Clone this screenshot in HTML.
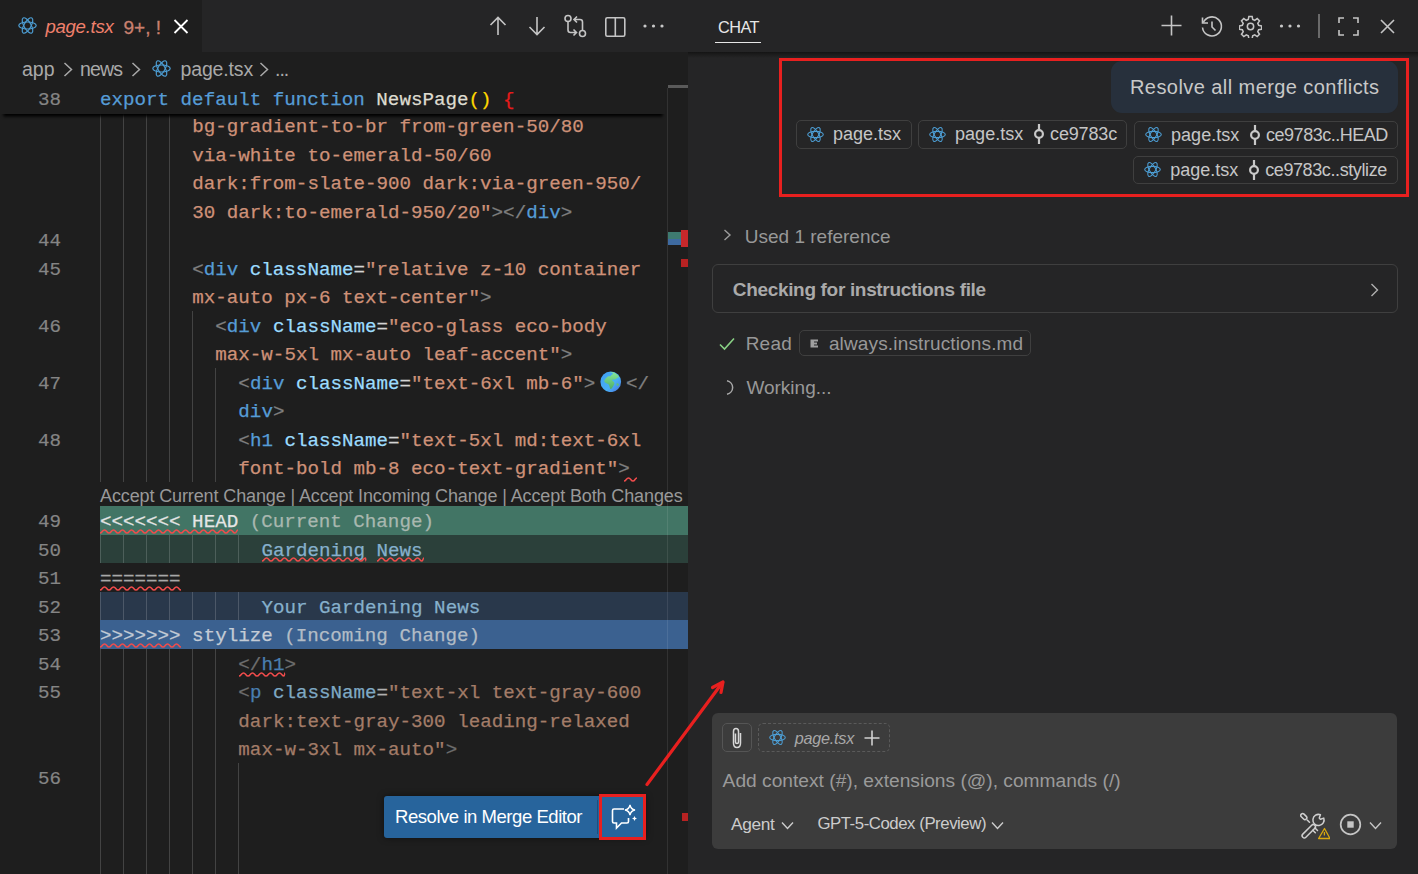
<!DOCTYPE html><html><head><meta charset="utf-8"><style>
*{box-sizing:border-box}
html,body{margin:0;padding:0}
body{width:1418px;height:874px;overflow:hidden;background:#1e1e1e;position:relative;font-family:"Liberation Sans",sans-serif}
.abs{position:absolute}
.row{position:absolute;left:0;width:668px;height:28.5px}
.code{position:absolute;left:100px;top:2.1px;-webkit-text-stroke:0.25px currentColor;height:28.5px;line-height:28.5px;white-space:pre;font-family:"Liberation Mono",monospace;font-size:19.2px;color:#d4d4d4}
.ln{position:absolute;left:0;width:61px;text-align:right;top:2px;-webkit-text-stroke:0.2px currentColor;line-height:28.5px;font-family:"Liberation Mono",monospace;font-size:19.2px;color:#858585}
.gd{position:absolute;top:0;width:1.6px;height:28.5px;background:rgba(255,255,255,0.165)}
.k{color:#569cd6}.f{color:#dcdcaa}.y{color:#ffd700}.rb{color:#f12b2b}.s{color:#ce9178}.p{color:#808080}.t{color:#569cd6}.a{color:#9cdcfe}.e{color:#d4d4d4}
.ds{color:#a37c68}.dp{color:#6e6e6e}.dt{color:#4a7eb0}.da{color:#7fa9c4}.de{color:#b0b0b0}
.w{color:#e6e6e6}.w2{color:#c4ccd6}.g3{color:#b2bcc6}.g{color:#a9b8b0}.g2{color:#a8a8a8}.lb{color:#86b0cc}
.sq{text-decoration:underline wavy #f14c4c;text-decoration-thickness:1.5px;text-underline-offset:4px}
</style></head><body>

<div class="abs" style="left:0;top:0;width:688px;height:52px;background:#252526"></div>
<div class="abs" style="left:0;top:0;width:202px;height:52px;background:#1e1e1e"></div>
<div class="row" style="top:111.30px">
<div class="gd" style="left:99.50px"></div>
<div class="gd" style="left:122.56px"></div>
<div class="gd" style="left:145.62px"></div>
<div class="gd" style="left:168.68px"></div>
<div class="code" style="left:192.24px"><span class="s">bg-gradient-to-br from-green-50/80</span></div>
</div>
<div class="row" style="top:139.80px">
<div class="gd" style="left:99.50px"></div>
<div class="gd" style="left:122.56px"></div>
<div class="gd" style="left:145.62px"></div>
<div class="gd" style="left:168.68px"></div>
<div class="code" style="left:192.24px"><span class="s">via-white to-emerald-50/60</span></div>
</div>
<div class="row" style="top:168.30px">
<div class="gd" style="left:99.50px"></div>
<div class="gd" style="left:122.56px"></div>
<div class="gd" style="left:145.62px"></div>
<div class="gd" style="left:168.68px"></div>
<div class="code" style="left:192.24px"><span class="s">dark:from-slate-900 dark:via-green-950/</span></div>
</div>
<div class="row" style="top:196.80px">
<div class="gd" style="left:99.50px"></div>
<div class="gd" style="left:122.56px"></div>
<div class="gd" style="left:145.62px"></div>
<div class="gd" style="left:168.68px"></div>
<div class="code" style="left:192.24px"><span class="s">30 dark:to-emerald-950/20"</span><span class="p">&gt;&lt;/</span><span class="t">div</span><span class="p">&gt;</span></div>
</div>
<div class="row" style="top:225.30px">
<div class="gd" style="left:99.50px"></div>
<div class="gd" style="left:122.56px"></div>
<div class="gd" style="left:145.62px"></div>
<div class="gd" style="left:168.68px"></div>
<div class="ln">44</div>
</div>
<div class="row" style="top:253.80px">
<div class="gd" style="left:99.50px"></div>
<div class="gd" style="left:122.56px"></div>
<div class="gd" style="left:145.62px"></div>
<div class="gd" style="left:168.68px"></div>
<div class="ln">45</div>
<div class="code" style="left:192.24px"><span class="p">&lt;</span><span class="t">div</span><span class="w"> </span><span class="a">className</span><span class="e">=</span><span class="s">"relative z-10 container</span></div>
</div>
<div class="row" style="top:282.30px">
<div class="gd" style="left:99.50px"></div>
<div class="gd" style="left:122.56px"></div>
<div class="gd" style="left:145.62px"></div>
<div class="gd" style="left:168.68px"></div>
<div class="code" style="left:192.24px"><span class="s">mx-auto px-6 text-center"</span><span class="p">&gt;</span></div>
</div>
<div class="row" style="top:310.80px">
<div class="gd" style="left:99.50px"></div>
<div class="gd" style="left:122.56px"></div>
<div class="gd" style="left:145.62px"></div>
<div class="gd" style="left:168.68px"></div>
<div class="gd" style="left:191.74px"></div>
<div class="ln">46</div>
<div class="code" style="left:215.30px"><span class="p">&lt;</span><span class="t">div</span><span class="w"> </span><span class="a">className</span><span class="e">=</span><span class="s">"eco-glass eco-body</span></div>
</div>
<div class="row" style="top:339.30px">
<div class="gd" style="left:99.50px"></div>
<div class="gd" style="left:122.56px"></div>
<div class="gd" style="left:145.62px"></div>
<div class="gd" style="left:168.68px"></div>
<div class="gd" style="left:191.74px"></div>
<div class="code" style="left:215.30px"><span class="s">max-w-5xl mx-auto leaf-accent"</span><span class="p">&gt;</span></div>
</div>
<div class="row" style="top:367.80px">
<div class="gd" style="left:99.50px"></div>
<div class="gd" style="left:122.56px"></div>
<div class="gd" style="left:145.62px"></div>
<div class="gd" style="left:168.68px"></div>
<div class="gd" style="left:191.74px"></div>
<div class="gd" style="left:214.80px"></div>
<div class="ln">47</div>
<div class="code" style="left:238.36px"><span class="p">&lt;</span><span class="t">div</span><span class="w"> </span><span class="a">className</span><span class="e">=</span><span class="s">"text-6xl mb-6"</span><span class="p">&gt;</span><span style="display:inline-block;width:30.6px"> </span><span class="p">&lt;/</span></div>
</div>
<div class="row" style="top:396.30px">
<div class="gd" style="left:99.50px"></div>
<div class="gd" style="left:122.56px"></div>
<div class="gd" style="left:145.62px"></div>
<div class="gd" style="left:168.68px"></div>
<div class="gd" style="left:191.74px"></div>
<div class="gd" style="left:214.80px"></div>
<div class="code" style="left:238.36px"><span class="t">div</span><span class="p">&gt;</span></div>
</div>
<div class="row" style="top:424.80px">
<div class="gd" style="left:99.50px"></div>
<div class="gd" style="left:122.56px"></div>
<div class="gd" style="left:145.62px"></div>
<div class="gd" style="left:168.68px"></div>
<div class="gd" style="left:191.74px"></div>
<div class="gd" style="left:214.80px"></div>
<div class="ln">48</div>
<div class="code" style="left:238.36px"><span class="p">&lt;</span><span class="t">h1</span><span class="w"> </span><span class="a">className</span><span class="e">=</span><span class="s">"text-5xl md:text-6xl</span></div>
</div>
<div class="row" style="top:453.30px">
<div class="gd" style="left:99.50px"></div>
<div class="gd" style="left:122.56px"></div>
<div class="gd" style="left:145.62px"></div>
<div class="gd" style="left:168.68px"></div>
<div class="gd" style="left:191.74px"></div>
<div class="gd" style="left:214.80px"></div>
<div class="code" style="left:238.36px"><span class="s">font-bold mb-8 eco-text-gradient"</span><span class="p">&gt;</span></div>
</div>
<div class="row" style="top:506.00px">
<div class="abs" style="left:100px;top:0;width:588px;height:28.5px;background:#427565;"></div>
<div class="ln">49</div>
<div class="code" style="left:100.00px"><span class="w">&lt;&lt;&lt;&lt;&lt;&lt;&lt; HEAD</span><span class="g"> (Current Change)</span></div>
</div>
<div class="row" style="top:534.50px">
<div class="abs" style="left:100px;top:0;width:588px;height:28.5px;background:#2b403a;"></div>
<div class="gd" style="left:99.50px"></div>
<div class="gd" style="left:122.56px"></div>
<div class="gd" style="left:145.62px"></div>
<div class="gd" style="left:168.68px"></div>
<div class="gd" style="left:191.74px"></div>
<div class="gd" style="left:214.80px"></div>
<div class="gd" style="left:237.86px"></div>
<div class="ln">50</div>
<div class="code" style="left:261.42px"><span class="lb">Gardening News</span></div>
</div>
<div class="row" style="top:563.00px">
<div class="ln">51</div>
<div class="code" style="left:100.00px"><span class="g2">=======</span></div>
</div>
<div class="row" style="top:591.50px">
<div class="abs" style="left:100px;top:0;width:588px;height:28.5px;background:#29384b;"></div>
<div class="gd" style="left:99.50px"></div>
<div class="gd" style="left:122.56px"></div>
<div class="gd" style="left:145.62px"></div>
<div class="gd" style="left:168.68px"></div>
<div class="gd" style="left:191.74px"></div>
<div class="gd" style="left:214.80px"></div>
<div class="gd" style="left:237.86px"></div>
<div class="ln">52</div>
<div class="code" style="left:261.42px"><span class="lb">Your Gardening News</span></div>
</div>
<div class="row" style="top:620.00px">
<div class="abs" style="left:100px;top:0;width:588px;height:28.5px;background:#3b6190;"></div>
<div class="ln">53</div>
<div class="code" style="left:100.00px"><span class="w2">&gt;&gt;&gt;&gt;&gt;&gt;&gt; stylize</span><span class="g3"> (Incoming Change)</span></div>
</div>
<div class="row" style="top:648.50px">
<div class="gd" style="left:99.50px"></div>
<div class="gd" style="left:122.56px"></div>
<div class="gd" style="left:145.62px"></div>
<div class="gd" style="left:168.68px"></div>
<div class="gd" style="left:191.74px"></div>
<div class="gd" style="left:214.80px"></div>
<div class="ln">54</div>
<div class="code" style="left:238.36px"><span class="dp">&lt;/</span><span class="dt">h1</span><span class="dp">&gt;</span></div>
</div>
<div class="row" style="top:677.00px">
<div class="gd" style="left:99.50px"></div>
<div class="gd" style="left:122.56px"></div>
<div class="gd" style="left:145.62px"></div>
<div class="gd" style="left:168.68px"></div>
<div class="gd" style="left:191.74px"></div>
<div class="gd" style="left:214.80px"></div>
<div class="ln">55</div>
<div class="code" style="left:238.36px"><span class="dp">&lt;</span><span class="dt">p</span><span class="w"> </span><span class="da">className</span><span class="de">=</span><span class="ds">"text-xl text-gray-600</span></div>
</div>
<div class="row" style="top:705.50px">
<div class="gd" style="left:99.50px"></div>
<div class="gd" style="left:122.56px"></div>
<div class="gd" style="left:145.62px"></div>
<div class="gd" style="left:168.68px"></div>
<div class="gd" style="left:191.74px"></div>
<div class="gd" style="left:214.80px"></div>
<div class="code" style="left:238.36px"><span class="ds">dark:text-gray-300 leading-relaxed</span></div>
</div>
<div class="row" style="top:734.00px">
<div class="gd" style="left:99.50px"></div>
<div class="gd" style="left:122.56px"></div>
<div class="gd" style="left:145.62px"></div>
<div class="gd" style="left:168.68px"></div>
<div class="gd" style="left:191.74px"></div>
<div class="gd" style="left:214.80px"></div>
<div class="code" style="left:238.36px"><span class="ds">max-w-3xl mx-auto"</span><span class="dp">&gt;</span></div>
</div>
<div class="row" style="top:762.50px">
<div class="gd" style="left:99.50px"></div>
<div class="gd" style="left:122.56px"></div>
<div class="gd" style="left:145.62px"></div>
<div class="gd" style="left:168.68px"></div>
<div class="gd" style="left:191.74px"></div>
<div class="gd" style="left:214.80px"></div>
<div class="gd" style="left:237.86px"></div>
<div class="ln">56</div>
</div>
<div class="row" style="top:791.00px">
<div class="gd" style="left:99.50px"></div>
<div class="gd" style="left:122.56px"></div>
<div class="gd" style="left:145.62px"></div>
<div class="gd" style="left:168.68px"></div>
<div class="gd" style="left:191.74px"></div>
<div class="gd" style="left:214.80px"></div>
<div class="gd" style="left:237.86px"></div>
</div>
<div class="row" style="top:819.50px">
<div class="gd" style="left:99.50px"></div>
<div class="gd" style="left:122.56px"></div>
<div class="gd" style="left:145.62px"></div>
<div class="gd" style="left:168.68px"></div>
<div class="gd" style="left:191.74px"></div>
<div class="gd" style="left:214.80px"></div>
<div class="gd" style="left:237.86px"></div>
</div>
<div class="row" style="top:848.00px">
<div class="gd" style="left:99.50px"></div>
<div class="gd" style="left:122.56px"></div>
<div class="gd" style="left:145.62px"></div>
<div class="gd" style="left:168.68px"></div>
<div class="gd" style="left:191.74px"></div>
<div class="gd" style="left:214.80px"></div>
<div class="gd" style="left:237.86px"></div>
</div>
<div class="row" style="top:876.50px">
<div class="gd" style="left:99.50px"></div>
<div class="gd" style="left:122.56px"></div>
<div class="gd" style="left:145.62px"></div>
<div class="gd" style="left:168.68px"></div>
<div class="gd" style="left:191.74px"></div>
<div class="gd" style="left:214.80px"></div>
<div class="gd" style="left:237.86px"></div>
</div>
<svg class="abs" style="left:600px;top:370.8px" width="21.5" height="21.5" viewBox="0 0 22 22"><defs><linearGradient id="gbl" x1="0" y1="0" x2="1" y2="1"><stop offset="0" stop-color="#3f9df2"/><stop offset="0.6" stop-color="#48b0f5"/><stop offset="1" stop-color="#4a6fe0"/></linearGradient><linearGradient id="ggr" x1="0" y1="0" x2="0" y2="1"><stop offset="0" stop-color="#86e89a"/><stop offset="1" stop-color="#4fae68"/></linearGradient></defs><circle cx="11" cy="11" r="10.6" fill="url(#gbl)"/><path d="M9.5 1.3 C11 1.5 13 2 13.5 3 C12.5 3.5 11.5 3.8 11 5 C10 5.5 9 5 8 5.5 C7 6.5 5.5 7.5 4.5 9.5 C4 11 5 12 6.5 12.5 C8 13 9 13.5 9.5 15 C10 16.5 10 18 11 18.5 C12.5 18 13 16 14 14.5 C15 13 15 12 14 11 C13 10.5 12.5 10 12.5 9 C13.5 8.5 15 9 16 8.5 C17 7.5 18.5 7 19.5 6 C18 3.5 16 2 13.5 1.2 Z" fill="url(#ggr)"/><path d="M17 12.5 C18 12.5 19 13 19.5 14 C19 15 18 15.5 17 15 Z" fill="#5fbf78"/></svg>
<svg class="abs" style="left:18.1px;top:16.0px" width="19" height="19" viewBox="-12 -12 24 24"><g fill="none" stroke="#4d9ed4" stroke-width="1.5"><ellipse rx="11" ry="4.4"/><ellipse rx="11" ry="4.4" transform="rotate(60)"/><ellipse rx="11" ry="4.4" transform="rotate(120)"/></g></svg>
<div class="abs" style="left:45.5px;top:14px;white-space:pre;font-style:italic;font-size:18.6px;line-height:26px;color:#f0806c;letter-spacing:-0.3px">page.tsx</div>
<div class="abs" style="left:123.5px;top:14.5px;white-space:pre;font-size:19px;line-height:26px;color:#c9806f;-webkit-text-stroke:0.3px currentColor">9+, !</div>
<svg class="abs" style="left:173px;top:18.5px" width="16" height="15" viewBox="0 0 16 15"><path d="M1.5 1 L14.5 14 M14.5 1 L1.5 14" stroke="#ffffff" stroke-width="1.8"/></svg>
<svg class="abs" style="left:488px;top:15px" width="20" height="22" viewBox="0 0 20 22"><path d="M10 20 V3 M2.5 10 L10 2.5 L17.5 10" fill="none" stroke="#c5c5c5" stroke-width="1.6"/></svg>
<svg class="abs" style="left:527px;top:15px" width="20" height="22" viewBox="0 0 20 22"><path d="M10 2 V19 M2.5 12 L10 19.5 L17.5 12" fill="none" stroke="#c5c5c5" stroke-width="1.6"/></svg>
<svg class="abs" style="left:563px;top:14px" width="25" height="25" viewBox="0 0 25 25"><circle cx="5" cy="4.5" r="3" fill="none" stroke="#c5c5c5" stroke-width="1.6"/><circle cx="19.5" cy="19.5" r="3" fill="none" stroke="#c5c5c5" stroke-width="1.6"/><path d="M5 7.5 V16 Q5 18.5 7.5 18.5 H13 M10.5 15.5 L13.5 18.5 L10.5 21.5 M19.5 16.5 V8 Q19.5 5.5 17 5.5 H11.5 M14 2.5 L11 5.5 L14 8.5" fill="none" stroke="#c5c5c5" stroke-width="1.6"/></svg>
<svg class="abs" style="left:604px;top:16px" width="23" height="22" viewBox="0 0 23 22"><rect x="1.8" y="1.8" width="19" height="18.5" rx="1.5" fill="none" stroke="#c5c5c5" stroke-width="1.6"/><path d="M11.3 2 V20" fill="none" stroke="#c5c5c5" stroke-width="1.6"/></svg>
<svg class="abs" style="left:642px;top:22px" width="23" height="8" viewBox="0 0 23 8"><circle cx="3" cy="4" r="1.6" fill="#c8c8c8"/><circle cx="11.5" cy="4" r="1.6" fill="#c8c8c8"/><circle cx="20" cy="4" r="1.6" fill="#c8c8c8"/></svg>
<div class="abs" style="left:22px;top:56px;white-space:pre;font-size:19.5px;line-height:26px;color:#a9a9a9">app</div>
<div class="abs" style="left:80px;top:56px;white-space:pre;font-size:19.5px;line-height:26px;color:#a9a9a9;letter-spacing:-0.8px">news</div>
<div class="abs" style="left:180.5px;top:56px;white-space:pre;font-size:19.5px;line-height:26px;color:#a9a9a9;letter-spacing:-0.15px">page.tsx</div>
<div class="abs" style="left:275px;top:56px;white-space:pre;font-size:19.5px;line-height:26px;color:#a9a9a9;letter-spacing:-1px">...</div>
<svg class="abs" style="left:63px;top:62px" width="10" height="15" viewBox="0 0 10 15"><path d="M1.5 1 L8.5 7.5 L1.5 14" fill="none" stroke="#a9a9a9" stroke-width="1.5"/></svg>
<svg class="abs" style="left:130.6px;top:62px" width="10" height="15" viewBox="0 0 10 15"><path d="M1.5 1 L8.5 7.5 L1.5 14" fill="none" stroke="#a9a9a9" stroke-width="1.5"/></svg>
<svg class="abs" style="left:258.6px;top:62px" width="10" height="15" viewBox="0 0 10 15"><path d="M1.5 1 L8.5 7.5 L1.5 14" fill="none" stroke="#a9a9a9" stroke-width="1.5"/></svg>
<svg class="abs" style="left:151.5px;top:59.0px" width="19" height="19" viewBox="-12 -12 24 24"><g fill="none" stroke="#4d9ed4" stroke-width="1.5"><ellipse rx="11" ry="4.4"/><ellipse rx="11" ry="4.4" transform="rotate(60)"/><ellipse rx="11" ry="4.4" transform="rotate(120)"/></g></svg>
<div class="abs" style="left:0;top:85px;width:665px;height:28.5px;background:#1e1e1e;box-shadow:#000 0 5px 3px -2.5px"></div>
<div class="row" style="top:85px"><div class="ln" style="top:1.2px">38</div><div class="code" style="top:1.2px"><span class="k">export default function</span> <span style="color:#dedcd0">NewsPage</span><span class="y">()</span> <span style="color:#e81a1a">{</span></div></div>
<div class="abs" style="left:100px;top:483.8px;white-space:pre;font-size:18px;line-height:24px;color:#999999;letter-spacing:-0.12px">Accept Current Change | Accept Incoming Change | Accept Both Changes</div>
<svg class="abs" style="left:624.0px;top:476.5px;overflow:visible" width="13.0" height="5.0"><path d="M0 4.10 C2.25 4.10 2.25 0.90 4.50 0.90 C6.75 0.90 6.75 4.10 9.00 4.10 C11.00 4.10 11.00 0.90 13.00 0.90" fill="none" stroke="#f14c4c" stroke-width="1.5"/></svg>
<svg class="abs" style="left:100.0px;top:528.8px;overflow:visible" width="138.0" height="5.0"><path d="M0 4.10 C2.25 4.10 2.25 0.90 4.50 0.90 C6.75 0.90 6.75 4.10 9.00 4.10 C11.25 4.10 11.25 0.90 13.50 0.90 C15.75 0.90 15.75 4.10 18.00 4.10 C20.25 4.10 20.25 0.90 22.50 0.90 C24.75 0.90 24.75 4.10 27.00 4.10 C29.25 4.10 29.25 0.90 31.50 0.90 C33.75 0.90 33.75 4.10 36.00 4.10 C38.25 4.10 38.25 0.90 40.50 0.90 C42.75 0.90 42.75 4.10 45.00 4.10 C47.25 4.10 47.25 0.90 49.50 0.90 C51.75 0.90 51.75 4.10 54.00 4.10 C56.25 4.10 56.25 0.90 58.50 0.90 C60.75 0.90 60.75 4.10 63.00 4.10 C65.25 4.10 65.25 0.90 67.50 0.90 C69.75 0.90 69.75 4.10 72.00 4.10 C74.25 4.10 74.25 0.90 76.50 0.90 C78.75 0.90 78.75 4.10 81.00 4.10 C83.25 4.10 83.25 0.90 85.50 0.90 C87.75 0.90 87.75 4.10 90.00 4.10 C92.25 4.10 92.25 0.90 94.50 0.90 C96.75 0.90 96.75 4.10 99.00 4.10 C101.25 4.10 101.25 0.90 103.50 0.90 C105.75 0.90 105.75 4.10 108.00 4.10 C110.25 4.10 110.25 0.90 112.50 0.90 C114.75 0.90 114.75 4.10 117.00 4.10 C119.25 4.10 119.25 0.90 121.50 0.90 C123.75 0.90 123.75 4.10 126.00 4.10 C128.25 4.10 128.25 0.90 130.50 0.90 C132.75 0.90 132.75 4.10 135.00 4.10 C136.50 4.10 136.50 0.90 138.00 0.90" fill="none" stroke="#f14c4c" stroke-width="1.5"/></svg>
<svg class="abs" style="left:262.0px;top:557.3px;overflow:visible" width="104.0" height="5.0"><path d="M0 4.10 C2.25 4.10 2.25 0.90 4.50 0.90 C6.75 0.90 6.75 4.10 9.00 4.10 C11.25 4.10 11.25 0.90 13.50 0.90 C15.75 0.90 15.75 4.10 18.00 4.10 C20.25 4.10 20.25 0.90 22.50 0.90 C24.75 0.90 24.75 4.10 27.00 4.10 C29.25 4.10 29.25 0.90 31.50 0.90 C33.75 0.90 33.75 4.10 36.00 4.10 C38.25 4.10 38.25 0.90 40.50 0.90 C42.75 0.90 42.75 4.10 45.00 4.10 C47.25 4.10 47.25 0.90 49.50 0.90 C51.75 0.90 51.75 4.10 54.00 4.10 C56.25 4.10 56.25 0.90 58.50 0.90 C60.75 0.90 60.75 4.10 63.00 4.10 C65.25 4.10 65.25 0.90 67.50 0.90 C69.75 0.90 69.75 4.10 72.00 4.10 C74.25 4.10 74.25 0.90 76.50 0.90 C78.75 0.90 78.75 4.10 81.00 4.10 C83.25 4.10 83.25 0.90 85.50 0.90 C87.75 0.90 87.75 4.10 90.00 4.10 C92.25 4.10 92.25 0.90 94.50 0.90 C96.75 0.90 96.75 4.10 99.00 4.10 C101.25 4.10 101.25 0.90 103.50 0.90 C103.75 0.90 103.75 4.10 104.00 4.10" fill="none" stroke="#f14c4c" stroke-width="1.5"/></svg>
<svg class="abs" style="left:377.0px;top:557.3px;overflow:visible" width="47.0" height="5.0"><path d="M0 4.10 C2.25 4.10 2.25 0.90 4.50 0.90 C6.75 0.90 6.75 4.10 9.00 4.10 C11.25 4.10 11.25 0.90 13.50 0.90 C15.75 0.90 15.75 4.10 18.00 4.10 C20.25 4.10 20.25 0.90 22.50 0.90 C24.75 0.90 24.75 4.10 27.00 4.10 C29.25 4.10 29.25 0.90 31.50 0.90 C33.75 0.90 33.75 4.10 36.00 4.10 C38.25 4.10 38.25 0.90 40.50 0.90 C42.75 0.90 42.75 4.10 45.00 4.10 C46.00 4.10 46.00 0.90 47.00 0.90" fill="none" stroke="#f14c4c" stroke-width="1.5"/></svg>
<svg class="abs" style="left:100.0px;top:585.8px;overflow:visible" width="81.0" height="5.0"><path d="M0 4.10 C2.25 4.10 2.25 0.90 4.50 0.90 C6.75 0.90 6.75 4.10 9.00 4.10 C11.25 4.10 11.25 0.90 13.50 0.90 C15.75 0.90 15.75 4.10 18.00 4.10 C20.25 4.10 20.25 0.90 22.50 0.90 C24.75 0.90 24.75 4.10 27.00 4.10 C29.25 4.10 29.25 0.90 31.50 0.90 C33.75 0.90 33.75 4.10 36.00 4.10 C38.25 4.10 38.25 0.90 40.50 0.90 C42.75 0.90 42.75 4.10 45.00 4.10 C47.25 4.10 47.25 0.90 49.50 0.90 C51.75 0.90 51.75 4.10 54.00 4.10 C56.25 4.10 56.25 0.90 58.50 0.90 C60.75 0.90 60.75 4.10 63.00 4.10 C65.25 4.10 65.25 0.90 67.50 0.90 C69.75 0.90 69.75 4.10 72.00 4.10 C74.25 4.10 74.25 0.90 76.50 0.90 C78.75 0.90 78.75 4.10 81.00 4.10" fill="none" stroke="#f14c4c" stroke-width="1.5"/></svg>
<svg class="abs" style="left:100.0px;top:643.3px;overflow:visible" width="81.0" height="5.0"><path d="M0 4.10 C2.25 4.10 2.25 0.90 4.50 0.90 C6.75 0.90 6.75 4.10 9.00 4.10 C11.25 4.10 11.25 0.90 13.50 0.90 C15.75 0.90 15.75 4.10 18.00 4.10 C20.25 4.10 20.25 0.90 22.50 0.90 C24.75 0.90 24.75 4.10 27.00 4.10 C29.25 4.10 29.25 0.90 31.50 0.90 C33.75 0.90 33.75 4.10 36.00 4.10 C38.25 4.10 38.25 0.90 40.50 0.90 C42.75 0.90 42.75 4.10 45.00 4.10 C47.25 4.10 47.25 0.90 49.50 0.90 C51.75 0.90 51.75 4.10 54.00 4.10 C56.25 4.10 56.25 0.90 58.50 0.90 C60.75 0.90 60.75 4.10 63.00 4.10 C65.25 4.10 65.25 0.90 67.50 0.90 C69.75 0.90 69.75 4.10 72.00 4.10 C74.25 4.10 74.25 0.90 76.50 0.90 C78.75 0.90 78.75 4.10 81.00 4.10" fill="none" stroke="#f14c4c" stroke-width="1.5"/></svg>
<svg class="abs" style="left:239.0px;top:671.8px;overflow:visible" width="46.0" height="5.0"><path d="M0 4.10 C2.25 4.10 2.25 0.90 4.50 0.90 C6.75 0.90 6.75 4.10 9.00 4.10 C11.25 4.10 11.25 0.90 13.50 0.90 C15.75 0.90 15.75 4.10 18.00 4.10 C20.25 4.10 20.25 0.90 22.50 0.90 C24.75 0.90 24.75 4.10 27.00 4.10 C29.25 4.10 29.25 0.90 31.50 0.90 C33.75 0.90 33.75 4.10 36.00 4.10 C38.25 4.10 38.25 0.90 40.50 0.90 C42.75 0.90 42.75 4.10 45.00 4.10 C45.50 4.10 45.50 0.90 46.00 0.90" fill="none" stroke="#f14c4c" stroke-width="1.5"/></svg>
<div class="abs" style="left:667px;top:88px;width:1px;height:786px;background:rgba(255,255,255,0.09)"></div>
<div class="abs" style="left:668px;top:85px;width:20px;height:3px;background:#5a5a5a"></div>
<div class="abs" style="left:668px;top:232px;width:13px;height:7px;background:#3e7a70"></div>
<div class="abs" style="left:668px;top:239px;width:13px;height:6px;background:#3e6aa0"></div>
<div class="abs" style="left:681px;top:229.5px;width:7px;height:17px;background:#c7282b"></div>
<div class="abs" style="left:681px;top:259px;width:7px;height:8px;background:#b72222"></div>
<div class="abs" style="left:682px;top:813px;width:6px;height:8px;background:#b72222"></div>
<div class="abs" style="left:384px;top:796px;width:262px;height:41.7px;background:#27649c;border-radius:3px;box-shadow:0 0 6px rgba(0,0,0,.5)"></div>
<div class="abs" style="left:395px;top:804px;white-space:pre;font-size:18.5px;line-height:26px;color:#ffffff;letter-spacing:-0.45px">Resolve in Merge Editor</div>
<div class="abs" style="left:597px;top:800px;width:1px;height:34px;background:#1d4f7d"></div>
<svg class="abs" style="left:610px;top:803px" width="28" height="27" viewBox="0 0 28 27"><path d="M14 6 H4 Q2.5 6 2.5 7.5 V18.5 Q2.5 20 4 20 H6.5 V25 L11.5 20 H17 Q18.5 20 18.5 18.5 V15" fill="none" stroke="#fff" stroke-width="1.6"/><path d="M20 2 Q20.8 6.2 25 7 Q20.8 7.8 20 12 Q19.2 7.8 15 7 Q19.2 6.2 20 2 Z" fill="none" stroke="#fff" stroke-width="1.4"/><path d="M24.5 13 Q24.9 15.1 27 15.5 Q24.9 15.9 24.5 18 Q24.1 15.9 22 15.5 Q24.1 15.1 24.5 13Z" fill="#fff"/></svg>
<div class="abs" style="left:598.5px;top:794.2px;width:47.6px;height:45.8px;border:3.4px solid #e8201f"></div>
<div class="abs" style="left:688px;top:0;width:730px;height:874px;background:#252526"></div>
<div class="abs" style="left:688px;top:52px;width:730px;height:6px;background:linear-gradient(#141414,#1b1b1b 35%,#252526)"></div>
<div class="abs" style="left:718px;top:14.3px;white-space:pre;font-size:16.3px;line-height:26px;color:#e7e7e7;letter-spacing:-0.55px">CHAT</div>
<div class="abs" style="left:715px;top:41.6px;width:46px;height:1.6px;background:#e7e7e7"></div>
<svg class="abs" style="left:1161px;top:15px" width="21" height="21" viewBox="0 0 21 21"><path d="M10.5 0.5 V20.5 M0.5 10.5 H20.5" fill="none" stroke="#c5c5c5" stroke-width="1.6"/></svg>
<svg class="abs" style="left:1199.5px;top:14.5px" width="24" height="24" viewBox="0 0 24 24"><path d="M3.3 7.5 A9.5 9.5 0 1 1 2.5 12.5" fill="none" stroke="#c5c5c5" stroke-width="1.6"/><path d="M2.5 2.5 V8 H8" fill="none" stroke="#c5c5c5" stroke-width="1.6"/><path d="M12 6.5 V12 L15.5 15.5" fill="none" stroke="#c5c5c5" stroke-width="1.6"/></svg>
<svg class="abs" style="left:1239px;top:15px" width="23" height="23" viewBox="0 0 24 24"><path d="M10.3 1.5h3.4l.6 3.1 2.1.9 2.6-1.8 2.4 2.4-1.8 2.6.9 2.1 3.1.6v3.4l-3.1.6-.9 2.1 1.8 2.6-2.4 2.4-2.6-1.8-2.1.9-.6 3.1h-3.4l-.6-3.1-2.1-.9-2.6 1.8-2.4-2.4 1.8-2.6-.9-2.1-3.1-.6v-3.4l3.1-.6.9-2.1-1.8-2.6 2.4-2.4 2.6 1.8 2.1-.9z" fill="none" stroke="#c5c5c5" stroke-width="1.6"/><circle cx="12" cy="12" r="3.3" fill="none" stroke="#c5c5c5" stroke-width="1.6"/></svg>
<svg class="abs" style="left:1279px;top:22px" width="22" height="8" viewBox="0 0 22 8"><circle cx="2.5" cy="4" r="1.6" fill="#c8c8c8"/><circle cx="11" cy="4" r="1.6" fill="#c8c8c8"/><circle cx="19.5" cy="4" r="1.6" fill="#c8c8c8"/></svg>
<div class="abs" style="left:1318px;top:14px;width:1.6px;height:23.5px;background:#6a6a6a"></div>
<svg class="abs" style="left:1338px;top:17px" width="21" height="19" viewBox="0 0 21 19"><path d="M1 6 V1 H6 M15 1 H20 V6 M20 13 V18 H15 M6 18 H1 V13" fill="none" stroke="#c5c5c5" stroke-width="1.6"/></svg>
<svg class="abs" style="left:1379.5px;top:18.5px" width="15" height="15" viewBox="0 0 15 15"><path d="M1 1 L14 14 M14 1 L1 14" fill="none" stroke="#c5c5c5" stroke-width="1.6"/></svg>
<div class="abs" style="left:1111px;top:61.3px;width:287px;height:51.6px;background:#27303c;border-radius:11px"></div>
<div class="abs" style="left:1130px;top:73px;white-space:pre;font-size:20px;line-height:28px;color:#c8c8c8;letter-spacing:0.43px">Resolve all merge conflicts</div>
<div class="abs" style="left:796px;top:120.2px;width:115.70000000000005px;height:28.39999999999999px;border:1px solid #3f3f3f;border-radius:5px"></div><svg class="abs" style="left:807.0px;top:125.9px" width="17" height="17" viewBox="-12 -12 24 24"><g fill="none" stroke="#4d9ed4" stroke-width="1.5"><ellipse rx="11" ry="4.4"/><ellipse rx="11" ry="4.4" transform="rotate(60)"/><ellipse rx="11" ry="4.4" transform="rotate(120)"/></g></svg><div class="abs" style="left:833px;top:121.4px;white-space:pre;font-size:18px;line-height:26px;color:#c6c6c6">page.tsx</div>
<div class="abs" style="left:918.1px;top:120.2px;width:209.39999999999998px;height:28.39999999999999px;border:1px solid #3f3f3f;border-radius:5px"></div><svg class="abs" style="left:929.1px;top:125.9px" width="17" height="17" viewBox="-12 -12 24 24"><g fill="none" stroke="#4d9ed4" stroke-width="1.5"><ellipse rx="11" ry="4.4"/><ellipse rx="11" ry="4.4" transform="rotate(60)"/><ellipse rx="11" ry="4.4" transform="rotate(120)"/></g></svg><div class="abs" style="left:955.1px;top:121.4px;white-space:pre;font-size:18px;line-height:26px;color:#c6c6c6">page.tsx</div><svg class="abs" style="left:1032.6px;top:123.4px" width="12" height="22" viewBox="0 0 12 22"><circle cx="6" cy="11" r="3.9" fill="none" stroke="#c8c8c8" stroke-width="2.2"/><path d="M6 1 V7 M6 15 V21" stroke="#c8c8c8" stroke-width="2.2"/></svg><div class="abs" style="left:1050.1px;top:121.4px;white-space:pre;font-size:18px;line-height:26px;color:#c6c6c6;letter-spacing:-0.17px">ce9783c</div>
<div class="abs" style="left:1134.1px;top:120.5px;width:263.70000000000005px;height:28.0px;border:1px solid #3f3f3f;border-radius:5px"></div><svg class="abs" style="left:1145.1px;top:126.0px" width="17" height="17" viewBox="-12 -12 24 24"><g fill="none" stroke="#4d9ed4" stroke-width="1.5"><ellipse rx="11" ry="4.4"/><ellipse rx="11" ry="4.4" transform="rotate(60)"/><ellipse rx="11" ry="4.4" transform="rotate(120)"/></g></svg><div class="abs" style="left:1171.1px;top:121.5px;white-space:pre;font-size:18px;line-height:26px;color:#c6c6c6">page.tsx</div><svg class="abs" style="left:1248.6px;top:123.5px" width="12" height="22" viewBox="0 0 12 22"><circle cx="6" cy="11" r="3.9" fill="none" stroke="#c8c8c8" stroke-width="2.2"/><path d="M6 1 V7 M6 15 V21" stroke="#c8c8c8" stroke-width="2.2"/></svg><div class="abs" style="left:1266.1px;top:121.5px;white-space:pre;font-size:18px;line-height:26px;color:#c6c6c6;letter-spacing:-0.5px">ce9783c..HEAD</div>
<div class="abs" style="left:1133.2px;top:155.5px;width:264.5999999999999px;height:28.5px;border:1px solid #3f3f3f;border-radius:5px"></div><svg class="abs" style="left:1144.2px;top:161.2px" width="17" height="17" viewBox="-12 -12 24 24"><g fill="none" stroke="#4d9ed4" stroke-width="1.5"><ellipse rx="11" ry="4.4"/><ellipse rx="11" ry="4.4" transform="rotate(60)"/><ellipse rx="11" ry="4.4" transform="rotate(120)"/></g></svg><div class="abs" style="left:1170.2px;top:156.75px;white-space:pre;font-size:18px;line-height:26px;color:#c6c6c6">page.tsx</div><svg class="abs" style="left:1247.7px;top:158.8px" width="12" height="22" viewBox="0 0 12 22"><circle cx="6" cy="11" r="3.9" fill="none" stroke="#c8c8c8" stroke-width="2.2"/><path d="M6 1 V7 M6 15 V21" stroke="#c8c8c8" stroke-width="2.2"/></svg><div class="abs" style="left:1265.2px;top:156.75px;white-space:pre;font-size:18px;line-height:26px;color:#c6c6c6;letter-spacing:-0.4px">ce9783c..stylize</div>
<div class="abs" style="left:778.9px;top:57.7px;width:630.6px;height:139.6px;border:3.4px solid #e8201f"></div>
<svg class="abs" style="left:723px;top:229px" width="9" height="12" viewBox="0 0 9 12"><path d="M1.5 1 L7 6 L1.5 11" fill="none" stroke="#9d9d9d" stroke-width="1.4"/></svg>
<div class="abs" style="left:744.8px;top:223.5px;white-space:pre;font-size:19px;line-height:26px;color:#989898">Used 1 reference</div>
<div class="abs" style="left:712.3px;top:264.3px;width:685.5px;height:49px;border:1px solid #3f3f3f;border-radius:6px"></div>
<div class="abs" style="left:732.8px;top:277.3px;white-space:pre;font-size:19px;font-weight:bold;line-height:26px;color:#aaaaaa;letter-spacing:-0.33px">Checking for instructions file</div>
<svg class="abs" style="left:1369.5px;top:282.5px" width="9" height="14" viewBox="0 0 9 14"><path d="M1.5 1 L7.5 7 L1.5 13" fill="none" stroke="#b0b0b0" stroke-width="1.4"/></svg>
<svg class="abs" style="left:719px;top:337px" width="16" height="14" viewBox="0 0 16 14"><path d="M1 7.5 L5.5 12 L15 1.5" fill="none" stroke="#89d185" stroke-width="1.6"/></svg>
<div class="abs" style="left:745.7px;top:330.8px;white-space:pre;font-size:19px;line-height:26px;color:#989898;letter-spacing:0.2px">Read</div>
<div class="abs" style="left:799.2px;top:330.1px;width:232.3px;height:26.2px;border:1px solid #3f3f3f;border-radius:5px"></div>
<svg class="abs" style="left:809.5px;top:339px" width="9" height="9" viewBox="0 0 9 9"><path d="M0.5 0.5 H8 V2.5 H4 V3.5 H7 V5.5 H4 V6.5 H8 V8.5 H0.5Z" fill="#a0a0a0"/></svg>
<div class="abs" style="left:828.9px;top:330.8px;white-space:pre;font-size:19px;line-height:26px;color:#989898;letter-spacing:0.15px">always.instructions.md</div>
<svg class="abs" style="left:724px;top:379px" width="12" height="17" viewBox="0 0 12 17"><path d="M3 1.8 A6.8 6.8 0 0 1 3 15.2" fill="none" stroke="#a8a8a8" stroke-width="1.5"/></svg>
<div class="abs" style="left:746.4px;top:374.5px;white-space:pre;font-size:19px;line-height:26px;color:#989898;letter-spacing:0px">Working...</div>
<svg class="abs" style="left:0;top:0" width="1418" height="874"><path d="M647 784.5 L722.5 682.5" stroke="#e8201f" stroke-width="3.2" fill="none" stroke-linecap="round"/><path d="M712.5 687.5 L723 682 L721 692.5" stroke="#e8201f" stroke-width="3.2" fill="none" stroke-linecap="round" stroke-linejoin="round"/></svg>
<div class="abs" style="left:712.4px;top:713.1px;width:685px;height:136.3px;background:#3c3c3c;border-radius:6px"></div>
<div class="abs" style="left:722.1px;top:723px;width:29.8px;height:29.4px;border:1px solid #555555;border-radius:5px"></div>
<svg class="abs" style="left:728px;top:726px" width="18" height="24" viewBox="0 0 18 24"><path d="M12.5 7 V17 Q12.5 21.5 9 21.5 Q5.5 21.5 5.5 17 V5.5 Q5.5 2.5 8 2.5 Q10.5 2.5 10.5 5.5 V16 Q10.5 17.5 9 17.5 Q7.5 17.5 7.5 16 V7.5" fill="none" stroke="#d8d8d8" stroke-width="1.5"/></svg>
<div class="abs" style="left:758.2px;top:723px;width:131.4px;height:29.4px;border:1px dashed #5a5a5a;border-radius:5px"></div>
<svg class="abs" style="left:768.9px;top:728.7px" width="17" height="17" viewBox="-12 -12 24 24"><g fill="none" stroke="#4d9ed4" stroke-width="1.5"><ellipse rx="11" ry="4.4"/><ellipse rx="11" ry="4.4" transform="rotate(60)"/><ellipse rx="11" ry="4.4" transform="rotate(120)"/></g></svg>
<div class="abs" style="left:794.8px;top:725px;white-space:pre;font-size:16.2px;font-style:italic;line-height:26px;color:#a8a8a8;letter-spacing:-0.25px">page.tsx</div>
<svg class="abs" style="left:864px;top:729.5px" width="16" height="16" viewBox="0 0 16 16"><path d="M8 0.5 V15.5 M0.5 8 H15.5" fill="none" stroke="#d0d0d0" stroke-width="1.6"/></svg>
<div class="abs" style="left:722.6px;top:768px;white-space:pre;font-size:19.2px;line-height:26px;color:#9a9a9a;letter-spacing:0px">Add context (#), extensions (@), commands (/)</div>
<div class="abs" style="left:731px;top:811px;white-space:pre;font-size:17.3px;line-height:26px;color:#cccccc;letter-spacing:-0.35px">Agent</div>
<svg class="abs" style="left:781px;top:820.5px" width="13" height="9" viewBox="0 0 13 9"><path d="M1 1.5 L6.5 7.5 L12 1.5" fill="none" stroke="#cccccc" stroke-width="1.4"/></svg>
<div class="abs" style="left:817.4px;top:811px;white-space:pre;font-size:16.8px;line-height:26px;color:#cccccc;letter-spacing:-0.45px">GPT-5-Codex (Preview)</div>
<svg class="abs" style="left:990.5px;top:820.5px" width="13" height="9" viewBox="0 0 13 9"><path d="M1 1.5 L6.5 7.5 L12 1.5" fill="none" stroke="#cccccc" stroke-width="1.4"/></svg>
<svg class="abs" style="left:1300px;top:812px" width="30" height="28" viewBox="0 0 30 28"><g fill="none" stroke="#cfcfcf" stroke-width="1.5" stroke-linecap="round"><rect x="-3.5" y="-1.9" width="7" height="3.8" rx="1.9" transform="translate(3.8 4.6) rotate(45)"/><path d="M7.2 8 L9.5 10.3"/><path d="M12.8 18.2 L15.3 20.7 M15 16 L17.5 18.5"/><rect x="-8.5" y="-2.2" width="17" height="4.4" rx="2.2" transform="translate(8.8 19.2) rotate(-45)"/><path d="M23.76 6.08 A5.6 5.6 0 1 1 20.42 2.74 L19.25 5.93 A2.2 2.2 0 0 0 20.57 7.25 Z" fill="#3c3c3c" stroke-linejoin="round"/></g><path d="M18.6 26.5 L24.5 16.5 L30 26.5 Z" fill="#3c3c3c" stroke="#d9a90f" stroke-width="1.3" stroke-linejoin="round"/><path d="M24.4 20 V23.5" stroke="#d9a90f" stroke-width="1.3"/></svg>
<svg class="abs" style="left:1339px;top:812.5px" width="23" height="23" viewBox="0 0 23 23"><circle cx="11.5" cy="11.5" r="9.8" fill="none" stroke="#c5c5c5" stroke-width="1.7"/><rect x="8.3" y="8.3" width="6.4" height="6.4" fill="#c5c5c5"/></svg>
<svg class="abs" style="left:1368.5px;top:820.5px" width="13" height="9" viewBox="0 0 13 9"><path d="M1 1.5 L6.5 7.5 L12 1.5" fill="none" stroke="#c5c5c5" stroke-width="1.4"/></svg>
</body></html>
